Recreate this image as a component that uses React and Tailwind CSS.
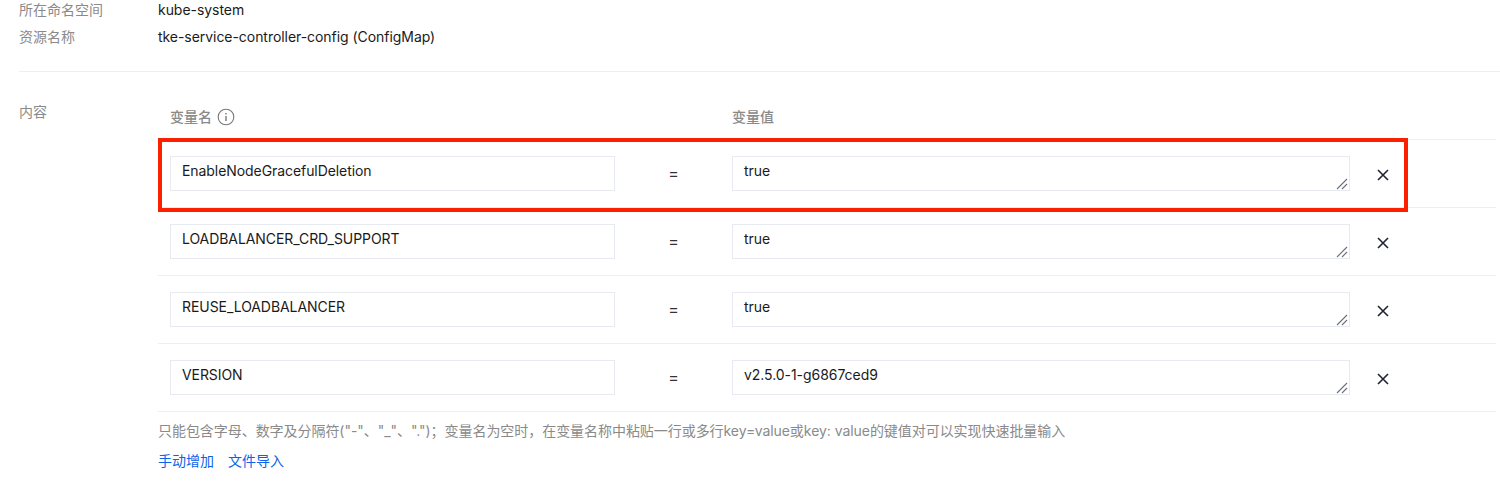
const rows = [
  ["EnableNodeGracefulDeletion", "true"],
  ["LOADBALANCER_CRD_SUPPORT", "true"],
  ["REUSE_LOADBALANCER", "true"],
  ["VERSION", "v2.5.0-1-g6867ced9"],
];

const font = { fontFamily: "Inter, 'Noto Sans CJK SC', sans-serif" };

function Row({ name, value }) {
  return (
    <div className="flex h-[68px] items-start border-b border-[#eeeff3] pt-[16px]">
      <input
        readOnly
        value={name}
        className="ml-[12px] h-[35px] w-[445px] border border-[#e8eaf2] bg-white px-[11px] pb-[6px] text-[14px] tracking-[-0.07px] text-[#1a1a1a] outline-none"
      />
      <div className="flex h-[35px] w-[117px] items-center justify-center pb-[1px] text-[16px] text-[#333]">=</div>
      <div className="relative h-[35px] w-[618px]">
        <textarea
          readOnly
          value={value}
          className="block h-[35px] w-[618px] resize-none border border-[#e8eaf2] bg-white px-[11px] pt-[4px] text-[14px] leading-[20px] tracking-[-0.05px] text-[#1a1a1a] outline-none"
        />
        <svg className="absolute bottom-[1px] right-[1px]" width="14" height="14" viewBox="0 0 14 14" fill="none" stroke="#6b6f7b" strokeWidth="1.1">
          <path d="M2 13 L12 3" />
          <path d="M7 13 L12 8" />
        </svg>
      </div>
      <div className="flex h-[35px] w-[66px] items-center justify-center pt-[2px]">
        <svg width="12" height="12" viewBox="0 0 12 12" fill="none" stroke="#1f2430" strokeWidth="1.6">
          <path d="M1 1 L11 11 M11 1 L1 11" />
        </svg>
      </div>
    </div>
  );
}

export default function App() {
  return (
    <div className="h-[481px] w-[1500px] overflow-hidden bg-white text-[14px]" style={font}>
      <div className="ml-[19px] flex h-[72px] flex-col border-b border-[#eeeff3]">
        <div className="-mt-[5px] flex h-[28px] items-center">
          <span className="w-[139px] text-[#8a8a8a]">所在命名空间</span>
          <span className="tracking-[-0.05px] text-[#1a1a1a]">kube-system</span>
        </div>
        <div className="-mt-[1px] flex h-[28px] items-center">
          <span className="w-[139px] text-[#8a8a8a]">资源名称</span>
          <span className="tracking-[-0.05px] text-[#1a1a1a]">tke-service-controller-config (ConfigMap)</span>
        </div>
      </div>

      <div className="flex pl-[19px]">
        <div className="w-[139px] pt-[29px] text-[#8a8a8a]">内容</div>
        <div className="relative w-[1338px]">
          <div className="flex h-[68px] items-end border-b border-[#eeeff3] pb-[12px] font-medium text-[#8a8a8a]">
            <div className="flex w-[574px] items-center gap-[5px] pl-[12px]">
              <span>变量名</span>
              <svg className="mt-[1px]" width="18" height="18" viewBox="0 0 18 18" fill="none" stroke="#777" strokeWidth="1.1">
                <circle cx="9" cy="9" r="7.8" />
                <path d="M9 8 V13" strokeWidth="1.4" />
                <path d="M9 5 V6.4" strokeWidth="1.4" />
              </svg>
            </div>
            <span>变量值</span>
          </div>
          {rows.map(([n, v]) => (
            <Row key={n} name={n} value={v} />
          ))}
          <div className="absolute left-0 top-[66px] h-[74px] w-[1250px] border-[4px] border-[#fb2000]" />
          <p className="mt-[9px] leading-[20px] tracking-[-0.05px] text-[#8a8a8a]">
            只能包含字母、数字及分隔符("-"、"_"、".")；变量名为空时，在变量名称中粘贴一行或多行key=value或key: value的键值对可以实现快速批量输入
          </p>
          <div className="mt-[10px] flex gap-[14px] leading-[20px] text-[#0a63e8]">
            <span>手动增加</span>
            <span>文件导入</span>
          </div>
        </div>
      </div>
    </div>
  );
}
